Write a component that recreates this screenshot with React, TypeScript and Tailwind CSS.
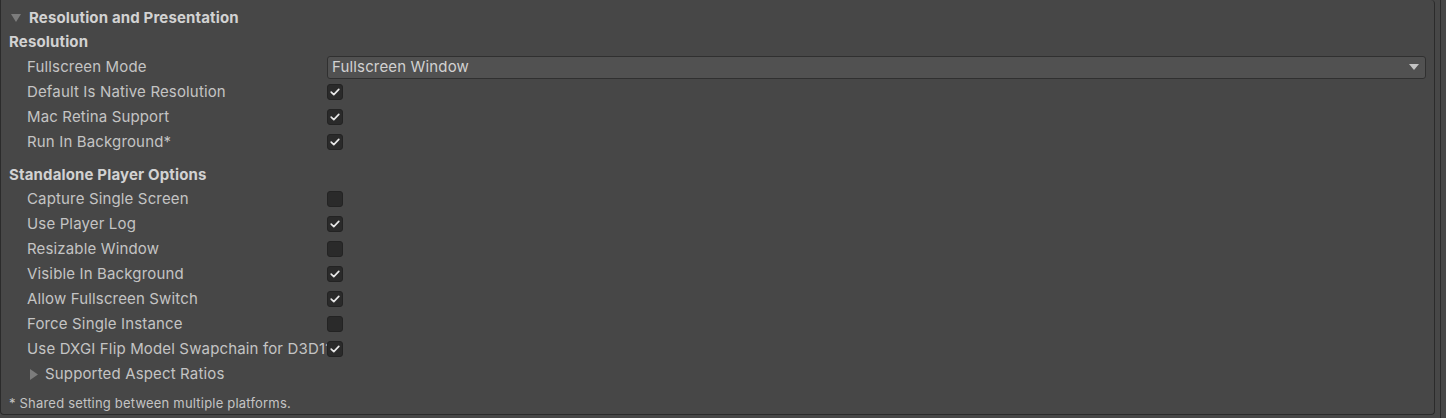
import React from 'react';

const font = { fontFamily: 'Inter, "Noto Sans", sans-serif' };

function Check({ on }: { on: boolean }) {
  return (
    <div className="w-4 h-4 rounded-[3px] bg-[#2a2a2a] border border-[#232323] flex items-center justify-center">
      {on && (
        <svg width="12" height="12" viewBox="0 0 12 12">
          <path d="M2.2 6.2 L4.8 8.6 L9.8 3.4" fill="none" stroke="#e8e8e8" strokeWidth="1.7" strokeLinecap="round" strokeLinejoin="round" />
        </svg>
      )}
    </div>
  );
}

function Row({ label, children }: { label: string; children: React.ReactNode }) {
  return (
    <div className="h-[25px] shrink-0 pt-[1px] flex items-center">
      <div className="w-[326px] pl-[26px] pr-[1px] overflow-hidden whitespace-nowrap text-[15px] tracking-[0.15px] text-[#c4c4c4]">{label}</div>
      {children}
    </div>
  );
}

const standalone: [string, boolean][] = [
  ['Capture Single Screen', false],
  ['Use Player Log', true],
  ['Resizable Window', false],
  ['Visible In Background', true],
  ['Allow Fullscreen Switch', true],
  ['Force Single Instance', false],
  ['Use DXGI Flip Model Swapchain for D3D11', true],
];

export default function App() {
  return (
    <div className="w-[1446px] h-[418px] bg-[#474747] flex overflow-hidden" style={font}>
      <div className="w-[1435px] h-[415px] border-r border-b border-l border-[#2b2b2b] rounded-tr-[4px] rounded-b-[4px] flex flex-col">
        <div className="h-[24px] shrink-0 mt-[6px] flex items-center">
          <svg width="12" height="10" viewBox="0 0 12 10" className="ml-[9px] mr-[7px]">
            <path d="M1 1 H11 L6 9 Z" fill="#7c7c7c" />
          </svg>
          <span className="text-[15px] tracking-[0.15px] font-bold text-[#d2d2d2]">Resolution and Presentation</span>
        </div>
        <div className="h-[24px] shrink-0 pt-[1px] flex items-center pl-[8px] text-[15px] tracking-[0.15px] font-bold text-[#d2d2d2]">Resolution</div>
        <Row label="Fullscreen Mode">
          <div className="w-[1099px] h-[23px] rounded-[3px] bg-[#515151] border border-[#303030] flex items-center justify-between pl-[4px] pr-[6px]">
            <span className="text-[15px] tracking-[0.15px] text-[#d2d2d2]">Fullscreen Window</span>
            <svg width="10" height="6" viewBox="0 0 10 6">
              <path d="M0 0 H10 L5 6 Z" fill="#c4c4c4" />
            </svg>
          </div>
        </Row>
        <Row label="Default Is Native Resolution"><Check on /></Row>
        <Row label="Mac Retina Support"><Check on /></Row>
        <Row label="Run In Background*"><Check on /></Row>
        <div className="h-[23px] shrink-0 mt-[9px] pt-[1px] flex items-center pl-[8px] text-[15px] tracking-[0.15px] font-bold text-[#d2d2d2]">Standalone Player Options</div>
        {standalone.map(([l, v]) => (
          <Row key={l} label={l}><Check on={v} /></Row>
        ))}
        <div className="h-[25px] shrink-0 pt-[1px] flex items-center pl-[29px]">
          <svg width="9" height="11" viewBox="0 0 9 11" className="mr-[6px]">
            <path d="M0 0 V11 L8 5.5 Z" fill="#7c7c7c" />
          </svg>
          <span className="text-[15px] tracking-[0.15px] text-[#c4c4c4]">Supported Aspect Ratios</span>
        </div>
        <div className="h-[19px] shrink-0 mt-[8px] flex items-center pl-[8px] text-[13px] tracking-[0.2px] text-[#c4c4c4]">* Shared setting between multiple platforms.</div>
      </div>
      <div className="w-[11px] h-full flex">
        <div className="w-[5px]" />
        <div className="w-px h-full bg-[#2b2b2b]" />
      </div>
    </div>
  );
}
